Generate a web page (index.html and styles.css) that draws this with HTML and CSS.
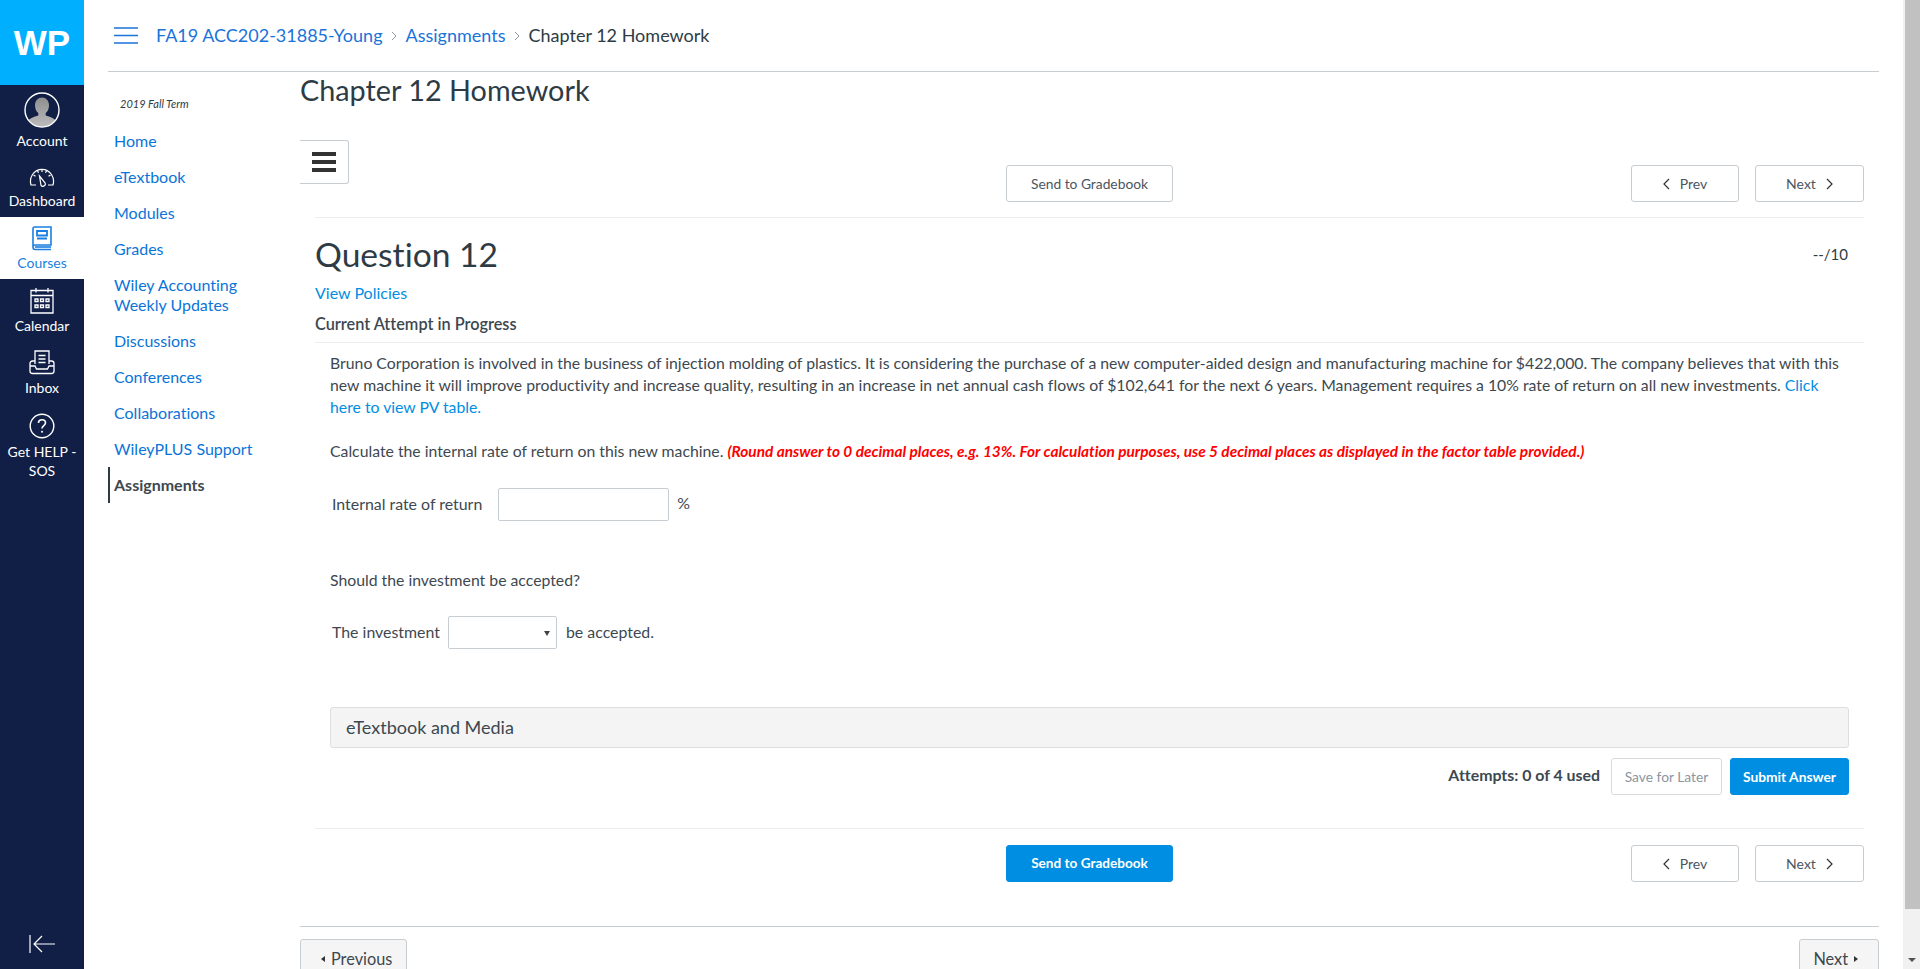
FILE: index.html
```html
<!DOCTYPE html>
<html lang="en">
<head>
<meta charset="utf-8">
<title>Chapter 12 Homework</title>
<link rel="stylesheet" href="styles.css">
</head>
<body>
<div class="app">
  <aside class="rail">
    <div class="logo">WP</div>
    <a class="rail-item account">
      <svg class="ic-avatar" viewBox="0 0 36 36"><defs><clipPath id="c"><circle cx="18" cy="18" r="16.5"/></clipPath><linearGradient id="g" x1="0" y1="0" x2="0" y2="1"><stop offset="0" stop-color="#8f8f8f"/><stop offset="1" stop-color="#bdbdbd"/></linearGradient></defs><g clip-path="url(#c)" fill="url(#g)"><path d="M18 5.500c4 0 7 3.200 7 8 0 3.200-1.400 6-3.300 7.500v2.500c4 1 10.300 3 11.300 7.500v5H3v-5c1-4.500 7.300-6.500 11.300-7.500V21C12.400 19.500 11 16.700 11 13.500c0-4.800 3-8 7-8z"/></g><circle cx="18" cy="18" r="17" fill="none" stroke="#fff" stroke-width="1.400"/></svg>
      <span>Account</span>
    </a>
    <a class="rail-item dash">
      <svg class="ic-dash" viewBox="0 0 26 19" fill="none" stroke="#fff" stroke-width="1.200"><path d="M7 17H2C1 13.500 1.200 10 3.500 6.500 6 3 9.500 1.300 13 1.300S20 3 22.500 6.500C24.800 10 25 13.500 24 17h-5"/><path d="M13 1.500V4M4.500 7l2 1.300M21.500 7l-2 1.300M8.500 2.700l1 2M17.500 2.700l-1 2"/><path d="M10.500 8l5.300 6.500a2.300 2.300 0 0 1-3.800 2.800z"/></svg>
      <span>Dashboard</span>
    </a>
    <a class="rail-item active">
      <svg class="ic-book" viewBox="0 0 20 25" fill="none" stroke="#1a7fe0" stroke-width="1.600"><path d="M1 21V2.500C1 1.500 1.700 1 2.500 1H19v18H3c-1.200 0-2 .8-2 2s.8 2.500 2 2.500h16"/><path d="M3 21h16"/><path d="M5 5h10v4.500H5zM5 12.500h10" stroke-width="1.800"/></svg>
      <span>Courses</span>
    </a>
    <a class="rail-item cal">
      <svg class="ic-cal" viewBox="0 0 24 27" fill="none" stroke="#fff" stroke-width="1.300"><path d="M1 3.500h22v22.500H1zM1 8.500h22M6 1v4.500M18 1v4.500"/><path d="M5 12h3v2.500H5zM10.500 12h3v2.500h-3zM16 12h3v2.500h-3zM5 18h3v2.500H5zM10.500 18h3v2.500h-3zM16 18h3v2.500h-3z"/></svg>
      <span>Calendar</span>
    </a>
    <a class="rail-item">
      <svg class="ic-inbox" viewBox="0 0 26 25" fill="none" stroke="#fff" stroke-width="1.300"><path d="M6 14V1h14v13"/><path d="M9.500 5.500h7M9.500 9h7M9.500 12.500h7"/><path d="M6 11H3.500C2 11 1 12 1 13.500V21c0 1.500 1 2.500 2.500 2.500h19c1.500 0 2.500-1 2.500-2.500v-7.500c0-1.500-1-2.500-2.500-2.500H20"/><path d="M1 16h5l1.500 3h11l1.500-3h5"/></svg>
      <span>Inbox</span>
    </a>
    <a class="rail-item">
      <svg class="ic-help" viewBox="0 0 26 26" fill="none" stroke="#fff" stroke-width="1.400"><circle cx="13" cy="13" r="11.800"/><path d="M9.500 10c0-2 1.500-3.300 3.500-3.300s3.500 1.300 3.500 3.100c0 2.800-3.500 2.700-3.500 5.700" stroke-width="1.600"/><circle cx="13" cy="18.800" r="1" fill="#fff" stroke="none"/></svg>
      <span>Get HELP - SOS</span>
    </a>
    <a class="rail-collapse">
      <svg class="ic-collapse" viewBox="0 0 26 20" fill="none" stroke="#fff" stroke-width="1.200"><path d="M1 1v18M26 10H5M13 2l-8 8 8 8"/></svg>
    </a>
  </aside>

  <div class="main">
    <header class="topbar">
      <svg class="ic-menu" viewBox="0 0 24 17" fill="none" stroke="#1a73d9" stroke-width="1.500"><path d="M0 1h24M0 8.500h24M0 16h24"/></svg>
      <nav class="crumbs">
        <a>FA19 ACC202-31885-Young</a>
        <svg class="crumb-sep" viewBox="0 0 6 10" fill="none" stroke="#8b969e" stroke-width="1"><path d="M1 1l4 4-4 4"/></svg>
        <a>Assignments</a>
        <svg class="crumb-sep" viewBox="0 0 6 10" fill="none" stroke="#8b969e" stroke-width="1"><path d="M1 1l4 4-4 4"/></svg>
        <span>Chapter 12 Homework</span>
      </nav>
    </header>

    <div class="body">
      <nav class="course-nav">
        <div class="term">2019 Fall Term</div>
        <ul class="course-links">
          <li><a>Home</a></li>
          <li><a>eTextbook</a></li>
          <li><a>Modules</a></li>
          <li><a>Grades</a></li>
          <li><a>Wiley Accounting Weekly Updates</a></li>
          <li><a>Discussions</a></li>
          <li><a>Conferences</a></li>
          <li><a>Collaborations</a></li>
          <li><a>WileyPLUS Support</a></li>
          <li class="current"><a>Assignments</a></li>
        </ul>
      </nav>

      <main class="content">
        <h1 class="page-title">Chapter 12 Homework</h1>
        <div class="toolbar-row">
          <button class="burger"><svg class="ic-burger" viewBox="0 0 24 20" fill="#333"><path d="M0 0h24v4H0zM0 8h24v4H0zM0 16h24v4H0z"/></svg></button>
        </div>
        <div class="assign-nav top">
          <div class="assign-center"><button class="btn btn-send">Send to Gradebook</button></div>
          <div class="assign-pager">
            <button class="btn btn-prev"><svg class="chev" viewBox="0 0 7 12" fill="none" stroke="#333" stroke-width="1.200"><path d="M6 1L1 6l5 5"/></svg>Prev</button>
            <button class="btn btn-next">Next<svg class="chev" viewBox="0 0 7 12" fill="none" stroke="#333" stroke-width="1.200"><path d="M1 1l5 5-5 5"/></svg></button>
          </div>
        </div>

        <section class="question">
          <div class="q-head">
            <h2 class="q-title">Question 12</h2>
            <span class="q-score">--/10</span>
          </div>
          <a class="policies">View Policies</a>
          <div class="attempt-label">Current Attempt in Progress</div>
          <div class="q-body">
            <p class="q-text">Bruno Corporation is involved in the business of injection molding of plastics. It is considering the purchase of a new computer-aided design and manufacturing machine for $422,000. The company believes that with this new machine it will improve productivity and increase quality, resulting in an increase in net annual cash flows of $102,641 for the next 6 years. Management requires a 10% rate of return on all new investments. <a class="link">Click</a> <a class="link">here to view PV table.</a></p>
            <p class="q-calc">Calculate the internal rate of return on this new machine. <em class="note">(Round answer to 0 decimal places, e.g. 13%. For calculation purposes, use 5 decimal places as displayed in the factor table provided.)</em></p>
            <div class="answer irr">
              <label>Internal rate of return</label>
              <input class="field" type="text">
              <span class="unit">%</span>
            </div>
            <p class="q-should">Should the investment be accepted?</p>
            <div class="answer invest">
              <label>The investment</label>
              <span class="select"><svg class="caret" viewBox="0 0 6 6" fill="#444"><path d="M0 1h6L3 6z"/></svg></span>
              <span>be accepted.</span>
            </div>
            <div class="media-bar">eTextbook and Media</div>
            <div class="submit-row">
              <span class="attempts">Attempts: 0 of 4 used</span>
              <button class="btn btn-save">Save for Later</button>
              <button class="btn btn-submit">Submit Answer</button>
            </div>
          </div>
        </section>

        <div class="assign-nav bottom">
          <div class="assign-center"><button class="btn btn-send primary">Send to Gradebook</button></div>
          <div class="assign-pager">
            <button class="btn btn-prev"><svg class="chev" viewBox="0 0 7 12" fill="none" stroke="#333" stroke-width="1.200"><path d="M6 1L1 6l5 5"/></svg>Prev</button>
            <button class="btn btn-next">Next<svg class="chev" viewBox="0 0 7 12" fill="none" stroke="#333" stroke-width="1.200"><path d="M1 1l5 5-5 5"/></svg></button>
          </div>
        </div>

        <footer class="module-footer">
          <button class="foot-btn prev"><svg class="tri" viewBox="0 0 4 6" fill="#333"><path d="M4 0v6L0 3z"/></svg>Previous</button>
          <button class="foot-btn next"><span>Next</span><svg class="tri" viewBox="0 0 4 6" fill="#333"><path d="M0 0v6l4-3z"/></svg></button>
        </footer>
      </main>
    </div>
  </div>

  <div class="scrollbar">
    <div class="sb-thumb"></div>
    <svg class="sb-arrow" viewBox="0 0 8 4" fill="#505050"><path d="M0 0h8L4 4z"/></svg>
  </div>
</div>
</body>
</html>
```
FILE: styles.css
```css
* { box-sizing: border-box; }
html, body { margin: 0; height: 969px; overflow: hidden; }
body { font-family: Lato, "Open Sans", sans-serif; font-variant-ligatures: none; color: #2d3b45; background: #fff; font-size: 15px; }
button { font-family: inherit; font-variant-ligatures: none; cursor: pointer; }
svg { display: block; flex: none; }

.app { display: flex; height: 969px; }

/* left rail */
.rail { width: 84px; flex: none; background: #111f47; color: #fff; display: flex; flex-direction: column; font-size: 14px; }
.logo { height: 85px; background: #00b0ff; color: #fff; font-family: "Liberation Sans", Arial, sans-serif; font-weight: 700; font-size: 35px; display: flex; align-items: center; justify-content: center; }
.rail-item { display: flex; flex-direction: column; align-items: center; text-align: center; line-height: 19px; height: 63px; color: #fff; padding-top: 8px; }
.rail-item span { display: block; padding: 0 6px; margin-top: 3px; }
.rail-item.account { height: 70px; padding-top: 7px; }
.rail-item.dash { height: 62px; padding-top: 13px; }
.rail-item.dash span { margin-top: 4px; }
.rail-item.active { background: #fff; color: #1a7fe0; height: 62px; padding-top: 9px; }
.rail-item.active span { margin-top: 2px; }
.rail-item.cal span { margin-top: 2px; }
.ic-avatar { width: 36px; height: 36px; }
.ic-dash { width: 26px; height: 19px; }
.ic-book { width: 20px; height: 25px; }
.ic-cal { width: 24px; height: 27px; }
.ic-inbox { width: 26px; height: 25px; }
.ic-help { width: 26px; height: 26px; }
.rail-collapse { margin-top: auto; margin-bottom: 15px; align-self: center; }
.ic-collapse { width: 26px; height: 20px; }

/* main */
.main { flex: 1; min-width: 0; padding: 0 24px 0 24px; }
.topbar { height: 72px; display: flex; align-items: center; padding: 0 0 1px 6px; border-bottom: 1px solid #c7cdd1; }
.ic-menu { width: 24px; height: 17px; }
.crumbs { display: flex; align-items: center; margin-left: 18px; font-size: 18px; color: #2d3b45; }
.crumbs a { color: #1a73d9; }
.crumb-sep { width: 6px; height: 10px; margin: 2px 8.500px 0; }

.body { display: flex; }
.course-nav { width: 192px; flex: none; padding-top: 24px; }
.term { font-size: 11px; font-style: italic; padding-left: 12px; line-height: 16px; margin-bottom: 11px; }
.course-links { list-style: none; margin: 0; padding: 0; font-size: 16px; line-height: 20px; }
.course-links li { padding: 8px 30px 8px 6px; }
.course-links a { color: #0b74d8; }
.course-links .current { border-left: 2px solid #2d3b45; padding-left: 4px; }
.course-links .current a { color: #3d4850; font-weight: 700; }

.content { flex: 1; min-width: 0; }
.page-title { margin: 0; font-size: 28.800px; font-weight: 400; line-height: 36px; height: 68px; }
.toolbar-row { height: 0; }
.burger { width: 49px; height: 44px; background: #fff; border: 1px solid #c7cdd1; border-left: 0; border-radius: 0 3px 3px 0; padding: 0 0 0 12px; display: flex; align-items: center; }
.ic-burger { width: 24px; height: 20px; }

.assign-nav { display: flex; align-items: center; margin: 0 15px; padding-top: 25px; height: 78px; padding-bottom: 16px; border-bottom: 1px solid #ebeef0; position: relative; justify-content: flex-end; }
.assign-nav.bottom { border-bottom: 0; height: 98px; padding-top: 16px; padding-bottom: 45px; border-top: 1px solid #ebeef0; }
.assign-center { position: absolute; left: 0; right: 0; display: flex; justify-content: center; }
.assign-pager { display: flex; gap: 16px; }
.btn { height: 37px; border: 1px solid #c7cdd1; background: #fff; border-radius: 3px; color: #4a5661; font-size: 14px; display: inline-flex; align-items: center; justify-content: center; padding: 0; }
.btn-send { width: 167px; font-size: 13.800px; }
.btn-send.primary { background: #008ee2; border-color: #008ee2; color: #fff; font-weight: 700; font-size: 13.600px; }
.btn-prev { width: 108px; }
.btn-next { width: 109px; }
.chev { width: 7px; height: 12px; margin-top: 2px; }
.btn-prev .chev { margin-right: 10px; }
.btn-next .chev { margin-left: 10px; }

.question { margin: 0 15px; }
.q-head { display: flex; justify-content: space-between; align-items: center; height: 72px; padding-right: 16px; }
.q-title { margin: 0; font-weight: 400; font-size: 33.600px; line-height: 44px; margin-top: -1px; }
.q-score { font-size: 15px; }
.policies { display: block; color: #008ee2; font-size: 16px; line-height: 20px; margin-top: -7px; }
.link { color: #008ee2; }
.attempt-label { font-weight: 600; font-size: 16.300px; line-height: 20px; margin-top: 11px; padding-bottom: 8px; border-bottom: 1px solid #ebeef0; color: #3d4850; }
.q-body { padding: 9px 15px 0; font-size: 15.790px; line-height: 22px; color: #3d4850; }
.q-text { margin: 0; }
.q-calc { margin: 22px 0 0; }
.note { color: #f00; font-weight: 700; font-size: 15.400px; }
.answer { display: flex; align-items: center; padding-left: 2px; font-size: 15.900px; }
.irr { margin-top: 25px; height: 33px; }
.irr label { margin-right: 16px; }
.field { width: 171px; height: 33px; margin-top: 2px; border: 1px solid #c7cdd1; border-radius: 2px; padding: 0; background: #fff; }
.unit { margin-left: 8px; margin-top: -2px; }
.q-should { margin: 49px 0 0; }
.invest { margin-top: 24px; height: 33px; }
.invest label { margin-right: 8px; }
.select { width: 109px; height: 33px; margin-top: 2px; border: 1px solid #c7cdd1; border-radius: 2px; margin-right: 9px; display: flex; align-items: center; justify-content: flex-end; padding-right: 6px; }
.caret { width: 6px; height: 6px; }
.media-bar { margin-top: 59px; height: 41px; background: #f4f4f4; border: 1px solid #dcdfe1; border-radius: 3px; padding-left: 15px; font-size: 18px; line-height: 39px; color: #3d4850; }
.submit-row { display: flex; justify-content: flex-end; align-items: center; margin-top: 10px; margin-bottom: 33px; height: 37px; }
.attempts { font-weight: 700; font-size: 15.900px; color: #3d4850; margin-right: 11px; margin-top: -4px; }
.btn-save { width: 111px; color: #8b969e; font-size: 13.800px; margin-right: 8px; border-color: #d8dcdf; }
.btn-submit { width: 119px; background: #008ee2; border-color: #008ee2; color: #fff; font-weight: 700; font-size: 13.800px; }

.module-footer { border-top: 1px solid #c7cdd1; display: flex; justify-content: space-between; padding-top: 12px; }
.foot-btn { height: 44px; background: #f5f5f5; border: 1px solid #c7cdd1; border-radius: 3px; color: #3d4850; font-size: 16.300px; display: inline-flex; align-items: flex-start; line-height: 20px; }
.foot-btn.prev { padding: 9px 14px 9px 20px; }
.foot-btn.next { padding: 9px 20px 9px 13px; }
.tri { width: 4px; height: 6px; margin-top: 7px; }
.foot-btn .tri:first-child { margin-right: 6px; }
.foot-btn span + .tri { margin-left: 6px; }

/* scrollbar */
.scrollbar { width: 17px; flex: none; background: #f1f1f1; position: relative; }
.sb-thumb { height: 909px; background: #c1c1c1; margin-left: 2px; }
.sb-arrow { position: absolute; right: 4px; bottom: 7px; width: 8px; height: 4px; }
```
